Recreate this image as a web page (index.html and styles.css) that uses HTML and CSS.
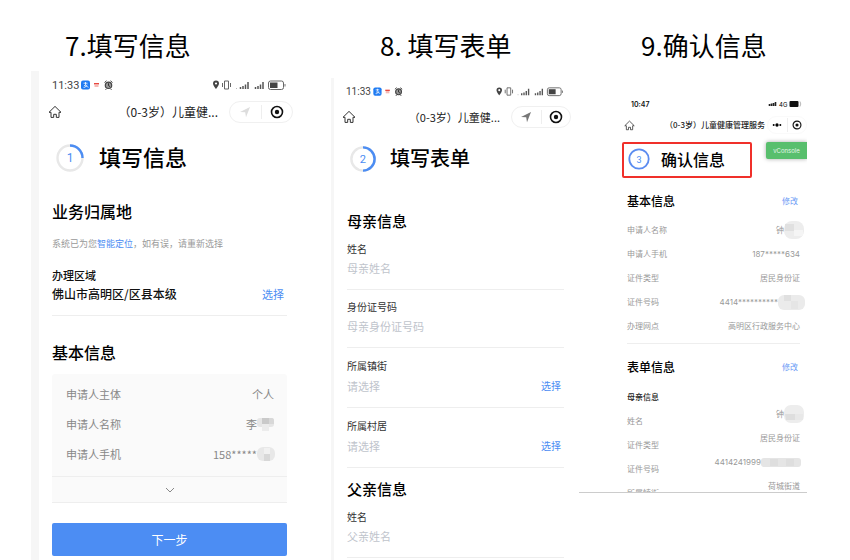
FILE: index.html
```html
<!DOCTYPE html>
<html lang="zh-CN">
<head>
<meta charset="utf-8">
<title>填写信息</title>
<link rel="stylesheet" href="styles.css">
</head>
<body>
<svg class="sprite" aria-hidden="true">
  <symbol id="home" viewBox="0 0 14 14"><path d="M1 7.300 7 1.400l6 5.900h-2V12.400H8.300V9.300H5.700v3.100H3V7.300Z" fill="none" stroke="currentColor" stroke-linejoin="round"/></symbol>
  <symbol id="plane" viewBox="0 0 12 12"><path d="M1 6 11 1 7 11.200 6.200 6.300Z" fill="currentColor"/></symbol>
  <symbol id="target" viewBox="0 0 14 14"><circle cx="7" cy="7" r="5.500" fill="none" stroke="currentColor" stroke-width="1.600"/><circle cx="7" cy="7" r="2.200" fill="currentColor"/></symbol>
  <symbol id="apps" viewBox="0 0 34 12">
    <rect x="1" y="1.500" width="9" height="9" rx="2" fill="#1f7bf2"/>
    <path d="M3.500 4.200h4M5.500 3v3M3.500 8.300c1.500.5 3-1 3.500-2.600M4 6.500c1.500 0 3 1 4.500 1.800" stroke="#fff" stroke-width=".8" fill="none"/>
    <path d="M14 4h5v1.500h-5z" fill="#e8473f"/><path d="M14.500 5.500h4V8h-4z" fill="#f5b9b4"/>
    <circle cx="28.500" cy="6.300" r="3.200" fill="#999" stroke="#444" stroke-width="1.200"/>
    <path d="m24.500 3.500 2-1.700m6 1.700-2-1.700M25.500 10.800l1-1m5 1-1-1" stroke="#444"/>
    <path d="M28.500 4.300v2.300l1.500 1" stroke="#222" stroke-width=".9" fill="none"/>
  </symbol>
  <symbol id="signals" viewBox="0 0 74 12">
    <path d="M4 1.500a3 3 0 0 1 3 3c0 2-3 5.500-3 5.500S1 6.500 1 4.500a3 3 0 0 1 3-3Z" fill="#444"/><circle cx="4" cy="4.500" r="1.100" fill="#fff"/>
    <path d="M12.500 2h4v8h-4zM10.500 4v4M18.500 4v4" fill="none" stroke="#666"/>
    <path d="M24.500 9v1" stroke="#bbb"/><path d="M28.500 8v2M31 7v3M33.500 5.500V10M36 3v7" stroke="#555" stroke-width="1.500"/>
    <path d="M43.500 8v2M46 7v3M48.500 5.500V10M51 3v7" stroke="#555" stroke-width="1.500"/>
    <rect x="56.500" y="2" width="15" height="8.500" rx="2" fill="none" stroke="#666"/><rect x="58" y="3.500" width="7.500" height="5.500" fill="#444"/><path d="M73 5v2.500" stroke="#777"/>
  </symbol>
</svg>

<main class="steps">
  <section class="step step-one">
    <h1 class="caption">7.填写信息</h1>
    <div class="phone">
      <div class="status"><span>11:33</span><svg class="apps"><use href="#apps"/></svg><svg class="signals"><use href="#signals"/></svg></div>
      <nav class="bar">
        <a class="home" href="#" aria-label="首页"><svg><use href="#home"/></svg></a>
        <span class="bar-title">（0-3岁）儿童健...</span>
        <div class="capsule"><button class="pale" aria-label="定位"><svg><use href="#plane"/></svg></button><button aria-label="关闭"><svg><use href="#target"/></svg></button></div>
      </nav>
      <div class="content">
        <div class="heading">
          <svg class="ring" viewBox="0 0 28 28"><circle cx="14" cy="14" r="12.500" fill="none" stroke="#e8e8e8" stroke-width="2.400"/><path d="M14 1.500A12.500 12.500 0 0 1 26.500 14" fill="none" stroke="#4c8df3" stroke-width="2.400"/><text x="14" y="18">1</text></svg>
          <span>填写信息</span>
        </div>
        <h2>业务归属地</h2>
        <p class="hint">系统已为您<a href="#">智能定位</a>，如有误，请重新选择</p>
        <div class="region">
          <span class="region-label">办理区域</span>
          <div class="line"><span>佛山市高明区/区县本级</span><button class="pick">选择</button></div>
        </div>
        <h2>基本信息</h2>
        <div class="card">
          <dl>
            <div><dt>申请人主体</dt><dd>个人</dd></div>
            <div><dt>申请人名称</dt><dd>李<svg class="mask" viewBox="0 0 18 14"><rect y="1" width="17" height="9" rx="3" fill="#e6e6e6"/><path d="M5 1h7v6H5z" fill="#cacaca"/><path d="M12 1h3q2 0 2 3v3h-5z" fill="#d8d8d8"/><path d="M5 7h7v7H5z" fill="#ececec"/></svg></dd></div>
            <div><dt>申请人手机</dt><dd>158*****<svg class="mask" viewBox="0 0 18 14"><rect width="18" height="14" rx="6" fill="#e8e8e8"/><path d="M7 1h6v6H7z" fill="#f1f1f1"/><path d="M7 7h6v7H7z" fill="#d8d8d8"/></svg></dd></div>
          </dl>
          <button class="expand" aria-label="展开"><svg viewBox="0 0 10 6"><path d="m1 1 4 4 4-4" fill="none" stroke="#888"/></svg></button>
        </div>
        <button class="next">下一步</button>
      </div>
    </div>
  </section>

  <section class="step step-two">
    <h1 class="caption">8. 填写表单</h1>
    <div class="phone">
      <div class="status"><span>11:33</span><svg class="apps"><use href="#apps"/></svg><svg class="signals"><use href="#signals"/></svg></div>
      <nav class="bar">
        <a class="home" href="#" aria-label="首页"><svg><use href="#home"/></svg></a>
        <span class="bar-title">（0-3岁）儿童健...</span>
        <div class="capsule"><button class="grey" aria-label="定位"><svg><use href="#plane"/></svg></button><button aria-label="关闭"><svg><use href="#target"/></svg></button></div>
      </nav>
      <form class="content">
        <div class="heading">
          <svg class="ring" viewBox="0 0 28 28"><circle cx="14" cy="14" r="12.500" fill="none" stroke="#e8e8e8" stroke-width="2.600"/><path d="M14 1.500a12.500 12.500 0 0 1 0 25" fill="none" stroke="#4c8df3" stroke-width="2.600"/><text x="14" y="18.500">2</text></svg>
          <span>填写表单</span>
        </div>
        <h2>母亲信息</h2>
        <div class="field"><label for="mother-name">姓名</label><input id="mother-name" placeholder="母亲姓名"></div>
        <div class="field"><label for="mother-id">身份证号码</label><input id="mother-id" placeholder="母亲身份证号码"></div>
        <div class="field choice"><label for="town">所属镇街</label><div class="line"><input id="town" placeholder="请选择" readonly><button type="button" class="pick">选择</button></div></div>
        <div class="field choice"><label for="village">所属村居</label><div class="line"><input id="village" placeholder="请选择" readonly><button type="button" class="pick">选择</button></div></div>
        <h2>父亲信息</h2>
        <div class="field"><label for="father-name">姓名</label><input id="father-name" placeholder="父亲姓名"></div>
      </form>
    </div>
  </section>

  <section class="step step-three">
    <h1 class="caption">9.确认信息</h1>
    <div class="phone">
      <div class="status"><span>10:47</span><svg class="signals" viewBox="0 0 34 10"><path d="M1.500 5V7M3.500 4.500V7M5.500 4v3M7.500 3v4" stroke="#222" stroke-width="1.600"/><text x="11" y="7.500">4G</text><rect x="21.500" y="2" width="9" height="6" rx="1" fill="#111"/><path d="M32 2.500q1.500 2.500 0 5" fill="none" stroke="#999" stroke-width=".7"/></svg></div>
      <nav class="bar">
        <a class="home" href="#" aria-label="首页"><svg><use href="#home"/></svg></a>
        <span class="bar-title">（0-3岁）儿童健康管理服务</span>
        <div class="capsule"><button aria-label="更多"><svg viewBox="0 0 12 12"><circle cx="2" cy="6" r="1.200"/><circle cx="6" cy="6" r="2"/><circle cx="10" cy="6" r="1.200"/></svg></button><button aria-label="关闭"><svg><use href="#target"/></svg></button></div>
      </nav>
      <div class="top">
        <div class="heading">
          <svg class="ring" viewBox="0 0 22 22"><circle cx="11" cy="11" r="9.700" fill="none" stroke="#5b8cf0" stroke-width="1.800"/><text x="11" y="14.500">3</text></svg>
          <span>确认信息</span>
        </div>
        <button class="console">vConsole</button>
      </div>
      <div class="content">
        <div class="title-row"><h2>基本信息</h2><a href="#">修改</a></div>
        <dl class="basic">
          <div><dt>申请人名称</dt><dd>钟<svg class="mask blob" viewBox="0 0 20 18"><rect width="20" height="18" rx="8" fill="#ededed"/><path d="M1 3h9v7H1z" fill="#e0e0e0"/><path d="M10 9h9v6h-9z" fill="#f5f5f5"/></svg></dd></div>
          <div><dt>申请人手机</dt><dd>187*****634</dd></div>
          <div><dt>证件类型</dt><dd>居民身份证</dd></div>
          <div><dt>证件号码</dt><dd>4414**********<svg class="mask wide" viewBox="0 0 27 15"><rect width="27" height="15" rx="6" fill="#ebebeb"/><path d="M6 0h7v6H6z" fill="#e0e0e0"/><path d="M13 6h7v8h-7z" fill="#e5e5e5"/></svg></dd></div>
          <div><dt>办理网点</dt><dd>高明区行政服务中心</dd></div>
        </dl>
        <div class="title-row"><h2>表单信息</h2><a href="#">修改</a></div>
        <h3>母亲信息</h3>
        <dl class="details">
          <div><dt>姓名</dt><dd>钟<svg class="mask blob" viewBox="0 0 20 18"><rect width="20" height="18" rx="7" fill="#ededed"/><path d="M1 9h10v6H2z" fill="#dedede"/><path d="M11 9h8v6h-8z" fill="#e8e8e8"/></svg></dd></div>
          <div><dt>证件类型</dt><dd>居民身份证</dd></div>
          <div><dt>证件号码</dt><dd>4414241999<svg class="mask strip" viewBox="0 0 40 9"><rect width="40" height="9" rx="3" fill="#e5e5e5"/><path d="M9 1h8v7H9zM25 1h8v7h-8z" fill="#dedede"/></svg></dd></div>
          <div><dt>所属镇街</dt><dd>荷城街道</dd></div>
        </dl>
      </div>
    </div>
  </section>
</main>
</body>
</html>
```
FILE: styles.css
```css
* { box-sizing: border-box; }

body {
  margin: 0;
  background: #fff;
  color: #111;
  font-family: "Noto Sans CJK SC", sans-serif;
  overflow: hidden;
}

h1, h2, h3, p, dl, dd { margin: 0; }
svg { display: block; flex: none; }
a { color: #4c8df3; text-decoration: none; }

button, input {
  border: 0;
  padding: 0;
  background: none;
  font: inherit;
  color: inherit;
}

.sprite { position: absolute; width: 0; height: 0; }

.steps {
  display: grid;
  grid-template-columns: 300fr 248fr 228fr;
  min-height: 100vh;
  padding: 25px 43px 0 31px;
}

.step { display: flex; flex-direction: column; min-width: 0; }

.caption {
  margin-bottom: 1px;
  font-size: 26px;
  font-weight: 400;
  line-height: 40px;
  color: #000;
}

/* Shared phone chrome */
.status { display: flex; align-items: center; font-family: Roboto, sans-serif; font-size: 11px; color: #444; }
.signals { margin-left: auto; }
.bar { display: flex; align-items: center; color: #222; }
.bar-title { margin-left: auto; white-space: nowrap; font-size: 12px; line-height: 22px; }
.home { color: #333; }
.home svg { width: 14px; height: 14px; }

.capsule {
  display: flex;
  align-items: center;
  height: 22px;
  margin-left: 11px;
  border: 1px solid #f0f0f0;
  border-radius: 11px;
}
.capsule button { flex: 1; display: grid; place-items: center; height: 14px; color: #111; }
.capsule button + button { border-left: 1px solid #eee; }
.capsule svg { width: 12px; height: 12px; }
.capsule button + button svg { width: 14px; height: 14px; }
.capsule .pale { color: #ddd; }
.capsule .grey { color: #777; }

.heading { display: flex; align-items: flex-start; font-weight: 500; color: #000; }
.ring text { fill: #4c8df3; font-family: Roboto, sans-serif; font-size: 12px; font-weight: 400; text-anchor: middle; }
h2 { font-weight: 500; color: #000; }
.line { display: flex; justify-content: space-between; align-items: center; }
.pick { color: #4c8df3; }
dl > div { display: flex; justify-content: space-between; }
dd { display: flex; align-items: center; }

/* Step 7 */
.step-one .caption { padding-left: 34px; }
.step-one .phone {
  flex: 1;
  margin: 5px 38px 0 0;
  padding: 3px 0 4px;
  border-left: 8px solid #f6f6f6;
}
.step-one .status { height: 22px; padding: 0 7px 0 13px; }
.step-one .apps { width: 34px; height: 12px; margin-left: 1px; }
.step-one .signals { width: 74px; height: 12px; }
.step-one .bar { margin-top: 5px; padding-left: 9px; }
.step-one .capsule { width: 64px; }
.step-one .content { padding: 0 6px 0 13px; }
.step-one .heading { gap: 15px; margin: 21px 0 27px 4px; font-size: 22px; line-height: 24px; }
.step-one .ring { width: 28px; height: 28px; }
.step-one h2 { font-size: 16px; line-height: 24px; }
.hint { margin: 14px 0 16px; font-size: 9px; line-height: 14px; color: #999; }
.region { margin-bottom: 24px; padding-bottom: 12px; border-bottom: 1px solid #eee; }
.region-label { display: block; margin-bottom: 2px; font-size: 11px; line-height: 16px; font-weight: 500; }
.region .line { font-size: 12px; line-height: 18px; font-weight: 500; }
.region .pick { padding-right: 3px; font-size: 11px; font-weight: 400; }
.card { margin-top: 10px; background: #fafafa; border-radius: 3px; }
.card dl { padding: 5px 13px 7px 14px; font-size: 11px; line-height: 30px; color: #888; }
.card .mask { height: 14px; width: 18px; margin-right: -1px; }
.expand {
  display: grid;
  place-items: center;
  width: 100%;
  height: 27px;
  border: solid #eee;
  border-width: 1px 0;
}
.expand svg { width: 10px; height: 6px; }
.next {
  width: 100%;
  height: 33px;
  margin-top: 20px;
  border-radius: 2px;
  background: #4c8df3;
  color: #fff;
  font-size: 12px;
}

/* Step 8 */
.step-two .caption { padding-left: 49px; }
.step-two .phone {
  margin: 12px 8px 0 0;
  padding-top: 3px;
  border-left: 3px solid #f6f6f6;
}
.step-two .status { height: 20px; padding: 0 7px 0 12px; font-size: 10px; }
.step-two .apps { width: 32px; height: 11px; margin-left: 1px; }
.step-two .signals { width: 69px; height: 11px; }
.step-two .bar { margin-top: 5px; padding-left: 8px; }
.step-two .bar-title { font-size: 11px; }
.step-two .capsule { width: 60px; }
.step-two .content { padding: 0 7px 0 13px; }
.step-two .heading { gap: 14px; margin: 18px 0 38px 3px; font-size: 20px; line-height: 24px; }
.step-two .ring { width: 26px; height: 26px; }
.step-two h2 { margin-bottom: 10px; font-size: 15px; line-height: 22px; }
.field { margin-bottom: 10px; padding-bottom: 12px; border-bottom: 1px solid #eee; }
.field label { display: block; margin-bottom: 3px; font-size: 10px; line-height: 14px; color: #333; }
.field input { display: block; width: 100%; min-width: 0; height: 18px; font-size: 11px; outline: 0; }
.field input::placeholder { color: #c0c4cc; opacity: 1; }
.field .pick { flex: none; padding-right: 3px; font-size: 10px; line-height: 18px; }
.choice { padding-top: 1px; }
.choice label { margin-bottom: 4px; }

/* Step 9 */
.step-three .caption { padding-left: 62px; }
.step-three .phone {
  max-height: calc(100vh - 159px);
  margin-top: 26px;
  padding-top: 4px;
  border-bottom: 1px solid #ccc;
  overflow: hidden;
}
.step-three .status { height: 16px; padding: 0 5px 0 52px; font-family: Inter, sans-serif; font-size: 7px; font-weight: 600; color: #111; }
.step-three .signals { width: 34px; height: 10px; font-size: 6px; font-weight: 400; }
.step-three .bar { height: 18px; margin-top: 4px; padding-left: 45px; }
.step-three .home svg { width: 11px; height: 11px; }
.step-three .bar-title { font-size: 8px; font-weight: 500; }
.step-three .capsule { width: 40px; height: 18px; margin-left: 2px; border-color: #fafafa; }
.step-three .capsule svg { width: 10px; height: 10px; }
.step-three .capsule button + button svg { width: 10px; height: 10px; }
.top { display: flex; justify-content: space-between; align-items: flex-start; margin-top: 8px; padding-left: 43px; }
.step-three .heading {
  flex: 0 1 130px;
  align-items: center;
  gap: 11px;
  height: 36px;
  padding: 0 0 2px 4px;
  border: 2px solid #f0302a;
  border-radius: 2px;
  font-size: 16px;
  white-space: nowrap;
}
.step-three .ring { width: 22px; height: 22px; }
.step-three .ring text { font-size: 9px; }
.console {
  width: 41px;
  height: 17px;
  border-radius: 2px 0 0 2px;
  background: #58bf6d;
  box-shadow: 0 0 4px #aaa;
  color: #e4f5e8;
  font-family: Inter, sans-serif;
  font-size: 6px;
}
.step-three .content { padding: 0 7px 0 48px; }
.title-row { display: flex; justify-content: space-between; margin-top: 13px; padding-right: 2px; line-height: 20px; }
.title-row h2 { font-size: 12px; }
.title-row a { font-size: 8px; color: #6b9bf5; }
.step-three dl { font-family: Inter, "Noto Sans CJK SC", sans-serif; font-size: 8px; line-height: 24px; color: #999; }
.basic { margin-top: 7px; padding-bottom: 5px; border-bottom: 1px solid #eee; }
.step-three h3 { margin: 12px 0 4px; font-size: 8px; line-height: 16px; font-weight: 500; color: #222; }
.details > div { height: 24px; }
.details dd { height: 10px; line-height: 10px; }
.blob { width: 20px; height: 18px; margin-right: -4px; }
.wide { width: 27px; height: 15px; margin-right: -5px; }
.strip { width: 40px; height: 9px; margin-right: -1px; }
```
